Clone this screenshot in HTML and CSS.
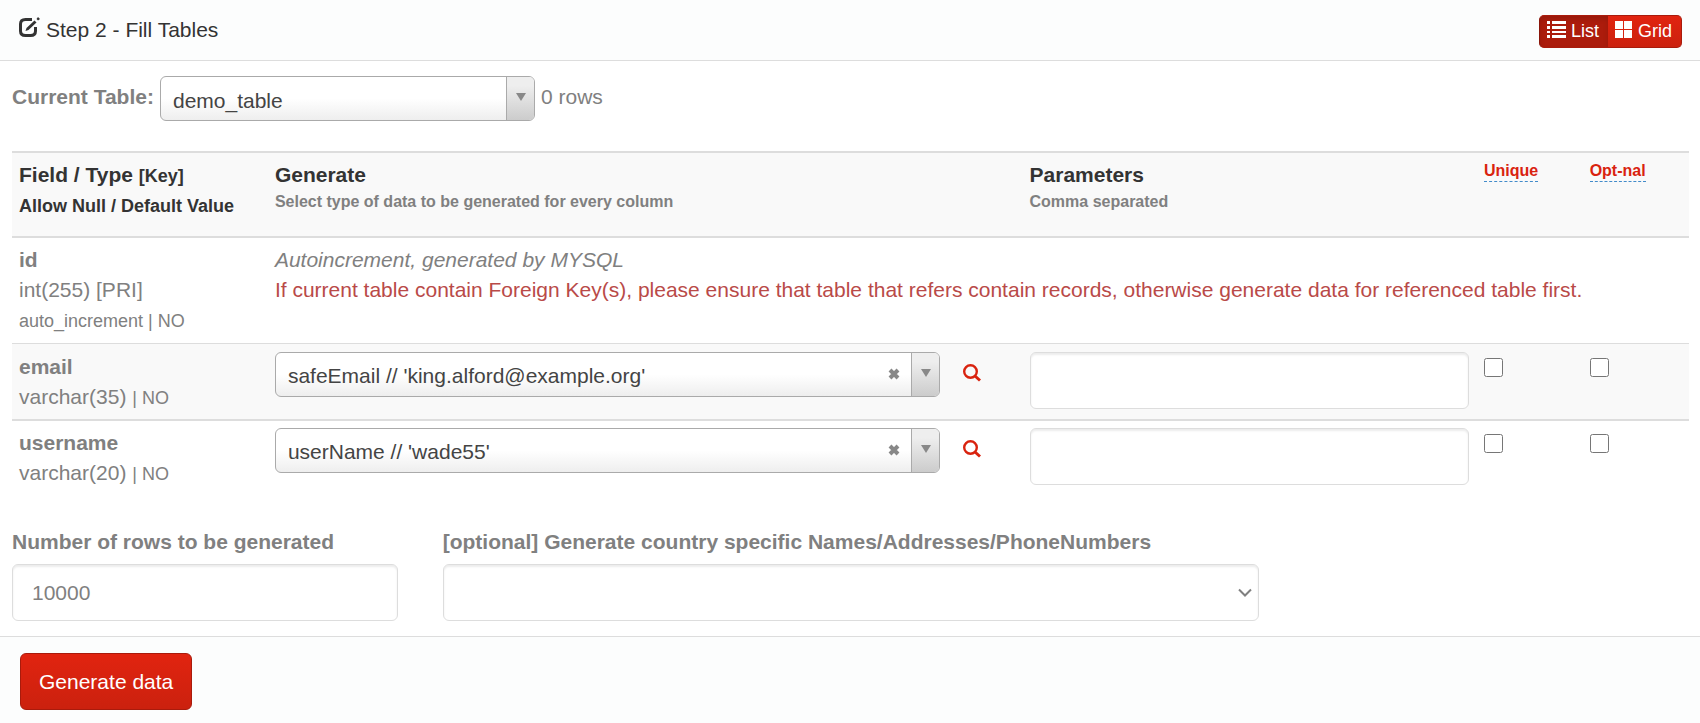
FILE: index.html
```html
<!DOCTYPE html>
<html lang="en">
<head>
	<meta charset="UTF-8">
	<title>Step 2 - Fill Tables</title>
	<link rel="stylesheet" href="styles.css">
</head>
<body>
<form class="panel">
	<div class="panel-heading">
		<h1 class="title">
			<svg class="icon-edit" viewBox="0 0 22 22" width="22" height="22">
				<path d="M14 2.500H7.500Q2.500 2.500 2.500 7v7q0 4.500 5 4.500h5q5 0 5-4.500v-4" fill="none" stroke="#333" stroke-width="3"/>
				<path d="M7.500 14l1-3 8-7.500 2 2-8 7.500z" fill="#333"/>
				<path d="M18.500 2l1.500-2 2 2-2 1.500z" fill="#333"/>
			</svg>
			Step 2 - Fill Tables
		</h1>
		<div class="btn-group">
			<button type="button" class="btn btn-small active">
				<svg viewBox="0 0 19 17" width="19" height="17" fill="#fff">
					<path d="M0 0h3v3H0zM5 0h14v3H5zM0 5h3v3H0zM5 5h14v3H5zM0 10h3v2H0zM5 10h14v2H5zM0 14h3v3H0zM5 14h14v3H5z"/>
				</svg>
				List
			</button>
			<button type="button" class="btn btn-small">
				<svg viewBox="0 0 17 17" width="17" height="17" fill="#fff">
					<path d="M0 0h8v8H0zM9 0h8v8H9zM0 9h8v8H0zM9 9h8v8H9z"/>
				</svg>
				Grid
			</button>
		</div>
	</div>

	<div class="panel-body">
		<div class="current">
			<label for="table">Current Table:</label>
			<div class="choice">
				<select id="table">
					<option>demo_table</option>
				</select>
			</div>
			<span>0 rows</span>
		</div>

		<table class="fields">
			<colgroup>
				<col class="col-field">
				<col class="col-generate">
				<col class="col-params">
				<col class="col-unique">
				<col>
			</colgroup>
			<thead>
				<tr>
					<th>Field / Type <small>[Key]</small><br><small>Allow Null / Default Value</small></th>
					<th>Generate<span class="hint">Select type of data to be generated for every column</span></th>
					<th>Parameters<span class="hint">Comma separated</span></th>
					<th><a href="#" class="tip">Unique</a></th>
					<th><a href="#" class="tip">Opt-nal</a></th>
				</tr>
			</thead>
			<tbody>
				<tr>
					<td><b>id</b><br>int(255) [PRI]<br><small>auto_increment | NO</small></td>
					<td colspan="4">
						<em>Autoincrement, generated by MYSQL</em><br>
						<span class="text-danger">If current table contain Foreign Key(s), please ensure that table that refers contain records, otherwise generate data for referenced table first.</span>
					</td>
				</tr>
				<tr class="odd">
					<td><b>email</b><br>varchar(35) <small>| NO</small></td>
					<td>
						<div class="generate">
							<div class="choice">
								<select aria-label="Generate email">
									<option>safeEmail // 'king.alford@example.org'</option>
								</select>
								<button type="button" class="clear" aria-label="Clear">
									<svg viewBox="0 0 12 12" width="12" height="12"><path d="M2 2l8 8M10 2l-8 8" stroke="#888" stroke-width="4"/></svg>
								</button>
							</div>
							<a href="#" class="search" aria-label="Search">
								<svg viewBox="0 0 18 18" width="18" height="18" fill="none" stroke="#d9230f">
									<circle cx="7.500" cy="7.500" r="6.300" stroke-width="2.400"/>
									<path d="M12 12l5 4.500" stroke-width="3"/>
								</svg>
							</a>
						</div>
					</td>
					<td><input type="text" class="form-control" aria-label="Parameters for email"></td>
					<td><input type="checkbox" class="check" aria-label="Unique"></td>
					<td><input type="checkbox" class="check" aria-label="Optional"></td>
				</tr>
				<tr class="thick">
					<td><b>username</b><br>varchar(20) <small>| NO</small></td>
					<td>
						<div class="generate">
							<div class="choice">
								<select aria-label="Generate username">
									<option>userName // 'wade55'</option>
								</select>
								<button type="button" class="clear" aria-label="Clear">
									<svg viewBox="0 0 12 12" width="12" height="12"><path d="M2 2l8 8M10 2l-8 8" stroke="#888" stroke-width="4"/></svg>
								</button>
							</div>
							<a href="#" class="search" aria-label="Search">
								<svg viewBox="0 0 18 18" width="18" height="18" fill="none" stroke="#d9230f">
									<circle cx="7.500" cy="7.500" r="6.300" stroke-width="2.400"/>
									<path d="M12 12l5 4.500" stroke-width="3"/>
								</svg>
							</a>
						</div>
					</td>
					<td><input type="text" class="form-control" aria-label="Parameters for username"></td>
					<td><input type="checkbox" class="check" aria-label="Unique"></td>
					<td><input type="checkbox" class="check" aria-label="Optional"></td>
				</tr>
			</tbody>
		</table>

		<div class="options">
			<div class="group">
				<label for="rows">Number of rows to be generated</label>
				<input type="text" id="rows" class="form-control" value="10000">
			</div>
			<div class="group">
				<label for="country">[optional] Generate country specific Names/Addresses/PhoneNumbers</label>
				<div class="country">
					<select id="country" class="form-control">
						<option></option>
					</select>
					<svg class="chevron" viewBox="0 0 14 10" width="14" height="10"><path d="M1 1.500l6 6 6-6" fill="none" stroke="#808080" stroke-width="2"/></svg>
				</div>
			</div>
		</div>
	</div>

	<div class="panel-footer">
		<button type="submit" class="btn">Generate data</button>
	</div>
</form>
</body>
</html>
```
FILE: styles.css
```css
*{
	box-sizing: border-box;
}
body{
	margin: 0;
	background: #fcfdfd;
	color: #808080;
	font: 21px/30px "Liberation Sans", Arial, sans-serif;
}
input, select, button{
	font: inherit;
	color: inherit;
	margin: 0;
}
small{
	font-size: 18px;
	line-height: 1;
}
label{
	font-weight: bold;
}

/* heading */
.panel-heading{
	display: flex;
	justify-content: space-between;
	align-items: flex-start;
	padding: 15px 18px;
	height: 61px;
	border-bottom: 1px solid #ddd;
}
.title{
	display: flex;
	gap: 6px;
	margin: 0;
	color: #333;
	font-size: 21px;
	font-weight: normal;
}
.icon-edit{
	margin-top: 2px;
}
.btn{
	height: 57px;
	padding: 0 18px;
	border: 1px solid #a91b0c;
	border-radius: 6px;
	background: linear-gradient(#e12410, #cb210e);
	color: #fff;
}
.btn-group{
	display: flex;
}
.btn-small{
	display: flex;
	gap: 6px;
	height: 33px;
	padding: 0 9px 0 7px;
	border-left: 0;
	border-radius: 0 5px 5px 0;
	font-size: 18px;
	line-height: 31px;
}
.btn-small svg{
	margin-top: 5px;
}
.btn-small.active{
	gap: 5px;
	padding: 0 9px 0 7px;
	border-left: 1px solid #8a160a;
	border-right: 0;
	border-radius: 5px 0 0 5px;
	background: #ac1c0c;
	box-shadow: inset 0 3px 5px rgba(0,0,0,.12);
}

/* body */
.panel-body{
	padding: 15px 11px 15px 12px;
	background: #fff;
}
.current{
	display: flex;
	gap: 6px;
	margin-bottom: 30px;
	line-height: 42px;
}
.current .choice{
	flex: 0 0 375px;
}
.choice{
	position: relative;
	height: 45px;
}
.choice select{
	appearance: none;
	display: block;
	width: 100%;
	height: 100%;
	padding: 3px 75px 0 12px;
	border: 1px solid #aaa;
	border-radius: 6px;
	background: linear-gradient(#fff 50%, #eee);
	color: #444;
}
.choice::before{
	content: "";
	position: absolute;
	top: 1px;
	right: 1px;
	bottom: 1px;
	width: 27px;
	border-left: 1px solid #aaa;
	border-radius: 0 5px 5px 0;
	background: linear-gradient(#eee 20%, #ccc);
	pointer-events: none;
}
.choice::after{
	content: "";
	position: absolute;
	top: 17px;
	right: 9px;
	border: solid transparent;
	border-width: 8px 5px 0;
	border-top-color: #888;
	pointer-events: none;
}
.clear{
	position: absolute;
	top: 16px;
	right: 40px;
	display: flex;
	padding: 0;
	border: 0;
	background: none;
}

/* table */
.fields{
	width: 100%;
	table-layout: fixed;
	border-collapse: separate;
	border-spacing: 0;
}
.col-field{
	width: 15.2%;
}
.col-generate{
	width: 45%;
}
.col-params{
	width: 27.1%;
}
.col-unique{
	width: 6.3%;
}
.fields th, .fields td{
	padding: 7px;
	text-align: left;
	vertical-align: top;
}
.fields th{
	height: 87px;
	border-top: 2px solid #ddd;
	border-bottom: 2px solid #ddd;
	background: #f9f9f9;
	color: #333;
}
.fields th + th, .fields td + td{
	padding-left: 8px;
}
.hint{
	display: block;
	color: #808080;
	font-size: 16px;
	line-height: 24px;
}
.tip{
	display: inline-block;
	border-bottom: 1px dashed #428bca;
	color: #d9230f;
	font-size: 16px;
	line-height: 21px;
	text-decoration: none;
	vertical-align: top;
}
.text-danger{
	color: #b94a48;
}
.fields tbody td{
	height: 105px;
}
.fields .odd td{
	height: 76px;
	padding-top: 8px;
	border-top: 1px solid #ddd;
	background: #f9f9f9;
}
.fields .thick td{
	height: 73px;
	border-top: 2px solid #ddd;
}
.generate{
	display: flex;
	gap: 23px;
}
.generate .choice{
	flex: 0 1 665px;
}
.search{
	margin-top: 12px;
	line-height: 0;
}
.form-control{
	display: block;
	width: 100%;
	height: 57px;
	padding: 0 19px;
	border: 1px solid #ddd;
	border-radius: 6px;
	background: #fff;
	box-shadow: inset 0 2px 2px rgba(0,0,0,.075);
}
.check{
	display: block;
	width: 19px;
	height: 19px;
	margin-top: 6px;
}

/* options */
.options{
	display: grid;
	grid-template-columns: 23% minmax(0, 816px);
	gap: 45px;
	margin-top: 32px;
}
.group label{
	display: block;
	margin-bottom: 7px;
}
.country{
	position: relative;
}
.country select{
	appearance: none;
}
.chevron{
	position: absolute;
	top: 24px;
	right: 7px;
	pointer-events: none;
}

.panel-footer{
	padding: 16px 20px 14px;
	border-top: 1px solid #ddd;
}
```
